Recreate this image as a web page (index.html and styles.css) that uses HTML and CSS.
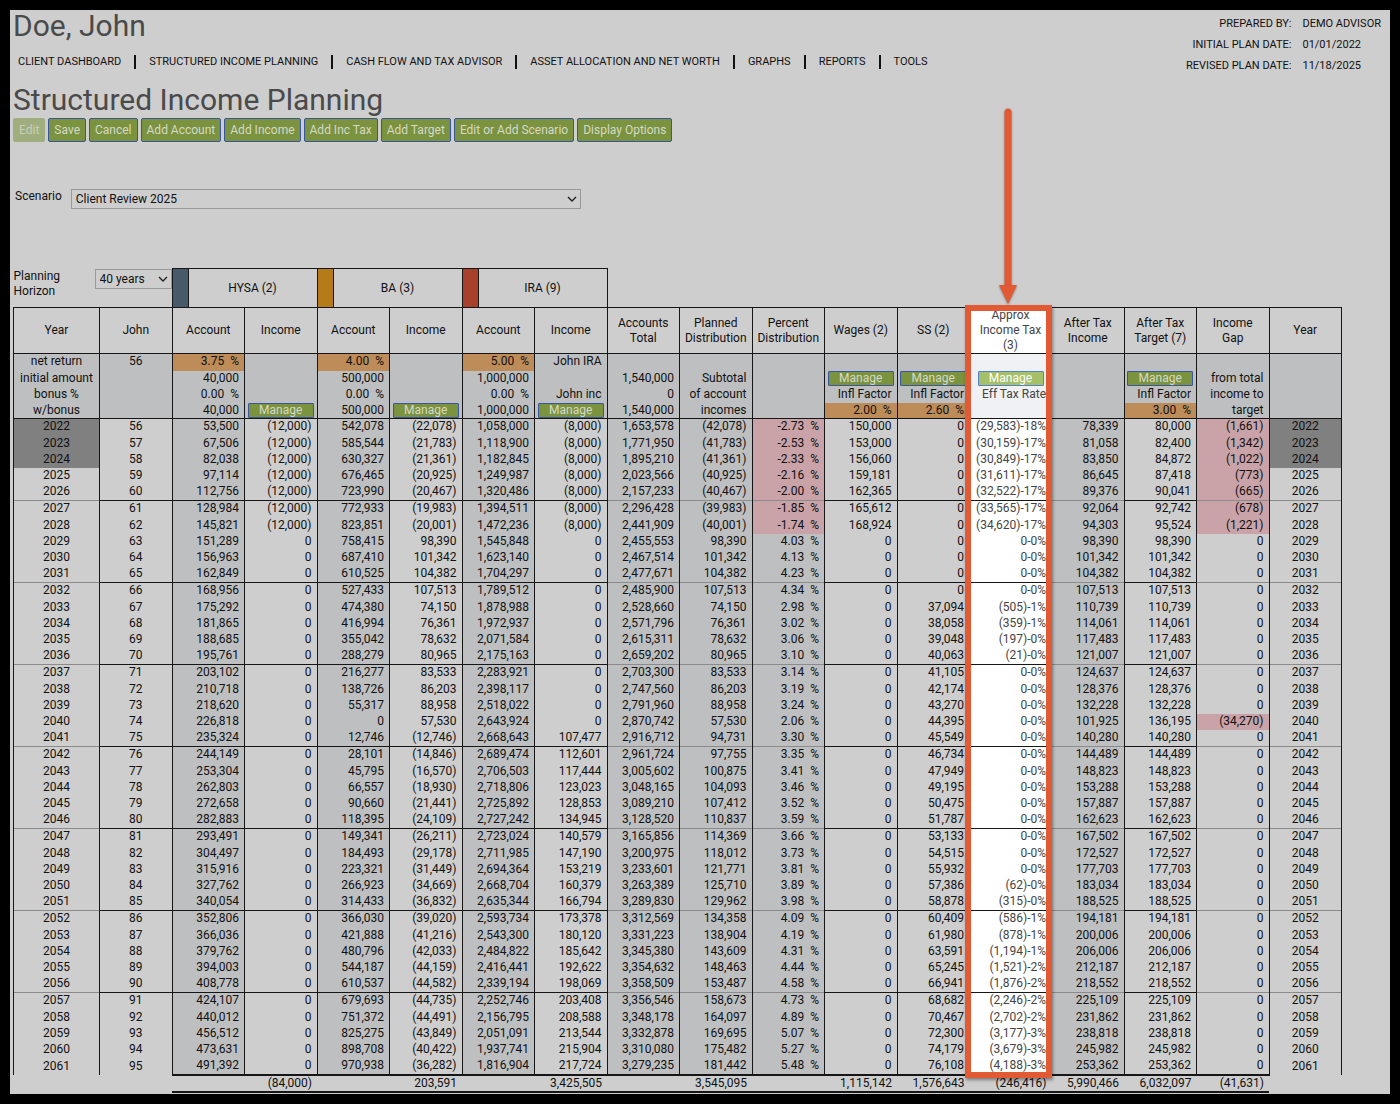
FILE: index.html
```html
<!DOCTYPE html>
<html lang="en">
<head>
    <meta charset="UTF-8">
    <meta name="viewport" content="width=device-width, initial-scale=1.0">
    <title>Structured Income Planning</title>
    <link rel="stylesheet" href="styles.css">
</head>
<body>
    <main class="page">
        <header class="header">
            <div class="header-left">
                <h1>Doe, John</h1>
                <nav class="menu">
                    <a href="#">CLIENT DASHBOARD</a>
                    <a href="#">STRUCTURED INCOME PLANNING</a>
                    <a href="#">CASH FLOW AND TAX ADVISOR</a>
                    <a href="#">ASSET ALLOCATION AND NET WORTH</a>
                    <a href="#">GRAPHS</a>
                    <a href="#">REPORTS</a>
                    <a href="#">TOOLS</a>
                </nav>
            </div>
            <dl class="plan-info">
                <dt>PREPARED BY:</dt><dd>DEMO ADVISOR</dd>
                <dt>INITIAL PLAN DATE:</dt><dd>01/01/2022</dd>
                <dt>REVISED PLAN DATE:</dt><dd>11/18/2025</dd>
            </dl>
        </header>

        <h2>Structured Income Planning</h2>
        <div class="toolbar">
            <button type="button" disabled>Edit</button>
            <button type="button">Save</button>
            <button type="button">Cancel</button>
            <button type="button">Add Account</button>
            <button type="button">Add Income</button>
            <button type="button">Add Inc Tax</button>
            <button type="button">Add Target</button>
            <button type="button">Edit or Add Scenario</button>
            <button type="button">Display Options</button>
        </div>

        <div class="scenario">
            <label for="scenario">Scenario</label>
            <select id="scenario" name="scenario">
                <option>Client Review 2025</option>
            </select>
        </div>

        <div class="plan">
            <table class="plan-table">
                <colgroup>
                    <col class="col-year"><col><col><col><col><col><col><col><col>
                    <col><col><col><col><col class="col-tax"><col><col><col><col>
                </colgroup>
                <thead>
                    <tr class="accounts">
                        <td colspan="2" class="blank">
                            <div class="horizon">
                                <label for="horizon">Planning Horizon</label>
                                <select id="horizon" name="horizon">
                                    <option>40 years</option>
                                </select>
                            </div>
                        </td>
                        <th colspan="2"><div class="account"><span class="swatch blue"></span><span class="name">HYSA (2)</span></div></th>
                        <th colspan="2"><div class="account"><span class="swatch gold"></span><span class="name">BA (3)</span></div></th>
                        <th colspan="2"><div class="account"><span class="swatch red"></span><span class="name">IRA (9)</span></div></th>
                        <td colspan="10" class="blank"></td>
                    </tr>
                    <tr class="titles">
                        <th>Year</th>
                        <th>John</th>
                        <th>Account</th>
                        <th>Income</th>
                        <th>Account</th>
                        <th>Income</th>
                        <th>Account</th>
                        <th>Income</th>
                        <th>Accounts Total</th>
                        <th>Planned Distribution</th>
                        <th>Percent Distribution</th>
                        <th>Wages (2)</th>
                        <th>SS (2)</th>
                        <th class="tax">Approx Income Tax (3)</th>
                        <th>After Tax Income</th>
                        <th>After Tax Target (7)</th>
                        <th>Income Gap</th>
                        <th>Year</th>
                    </tr>
                </thead>
                <tbody class="setup">
                    <tr class="first">
                        <td class="center">net return</td><td class="center">56</td>
                        <td class="rate">3.75&nbsp; %</td><td></td>
                        <td class="rate">4.00&nbsp; %</td><td></td>
                        <td class="rate">5.00&nbsp; %</td><td>John IRA</td>
                        <td></td><td></td><td></td><td></td><td></td><td class="tax"></td><td></td><td></td><td></td><td></td>
                    </tr>
                    <tr>
                        <td class="center">initial amount</td><td></td>
                        <td>40,000</td><td></td>
                        <td>500,000</td><td></td>
                        <td>1,000,000</td><td></td>
                        <td>1,540,000</td><td>Subtotal</td><td></td>
                        <td class="action"><button type="button">Manage</button></td>
                        <td class="action"><button type="button">Manage</button></td>
                        <td class="action tax"><button type="button">Manage</button></td>
                        <td></td>
                        <td class="action"><button type="button">Manage</button></td>
                        <td>from total</td><td></td>
                    </tr>
                    <tr>
                        <td class="center">bonus %</td><td></td>
                        <td>0.00&nbsp; %</td><td></td>
                        <td>0.00&nbsp; %</td><td></td>
                        <td>0.00&nbsp; %</td><td>John inc</td>
                        <td>0</td><td>of account</td><td></td>
                        <td>Infl Factor</td><td>Infl Factor</td><td class="tax">Eff Tax Rate</td><td></td><td>Infl Factor</td>
                        <td>income to</td><td></td>
                    </tr>
                    <tr>
                        <td class="center">w/bonus</td><td></td>
                        <td>40,000</td><td class="action"><button type="button">Manage</button></td>
                        <td>500,000</td><td class="action"><button type="button">Manage</button></td>
                        <td>1,000,000</td><td class="action"><button type="button">Manage</button></td>
                        <td>1,540,000</td><td>incomes</td><td></td>
                        <td class="rate">2.00&nbsp; %</td><td class="rate">2.60&nbsp; %</td><td class="tax"></td><td></td><td class="rate">3.00&nbsp; %</td>
                        <td>target</td><td></td>
                    </tr>
                </tbody>
                <tbody class="years" id="years"></tbody>
                <tfoot>
                    <tr>
                        <td colspan="2" class="blank"></td>
                        <td></td><td>(84,000)</td>
                        <td></td><td>203,591</td>
                        <td></td><td>3,425,505</td>
                        <td></td><td>3,545,095</td><td></td>
                        <td>1,115,142</td><td>1,576,643</td><td>(246,416)</td>
                        <td>5,990,466</td><td>6,032,097</td><td>(41,631)</td>
                        <td class="blank"></td>
                    </tr>
                </tfoot>
            </table>
            <div class="callout">
                <svg class="arrow" width="20" height="198" viewBox="0 0 20 198" aria-hidden="true">
                    <path d="M10 5V182" fill="none" stroke="#e25a33" stroke-width="7" stroke-linecap="round"/>
                    <path d="M1 178H19L10 197Z" fill="#e25a33"/>
                </svg>
            </div>
        </div>
    </main>
    <script src="script.js"></script>
</body>
</html>
```
FILE: styles.css
```css
* {
    box-sizing: border-box;
}
body {
    margin: 0;
    padding: 10px;
    background: #000;
    color: #111;
    font-family: Roboto, Arial, sans-serif;
    font-size: 12px;
    line-height: 15px;
}
button, select {
    font-family: inherit;
}
.page {
    background: #cecece;
    padding: 0 48px 1px 3px;
}

/* header */
.header {
    display: flex;
    justify-content: space-between;
    margin-right: -39px;
}
h1, h2 {
    margin: 0;
    color: #4a4a4a;
    font-size: 30px;
    font-weight: 400;
    line-height: 32px;
}
.menu {
    display: flex;
    padding: 12px 5px 14px;
}
.menu a {
    display: flex;
    align-items: center;
    color: #111;
    font-size: 11px;
    line-height: 16px;
    text-decoration: none;
}
.menu a + a::before {
    content: "";
    width: 2px;
    height: 14px;
    margin: 0 13px;
    background: #111;
}
.plan-info {
    display: grid;
    grid-template-columns: auto auto;
    column-gap: 11px;
    align-content: start;
    margin: 3px 0 0;
    font-size: 11px;
    line-height: 21px;
}
.plan-info dt {
    text-align: right;
}
.plan-info dd {
    margin: 0;
}

/* buttons under the title */
.toolbar {
    display: flex;
    gap: 3px;
    margin-top: 2px;
}
.toolbar button {
    height: 24px;
    padding: 0 5px;
    border: 1px solid #3a569c;
    border-radius: 2px;
    background: #7b923f;
    color: #d5d9c8;
    font-size: 12px;
}
.toolbar button:disabled {
    border-color: #a0ae7d;
    background: #a0ae7d;
    color: #c9cfba;
}

/* drop-downs */
select {
    appearance: none;
    height: 20px;
    padding: 0 4px;
    border: 1px solid #999;
    border-radius: 0;
    background: #cecece url("data:image/svg+xml,%3Csvg xmlns='http://www.w3.org/2000/svg' width='10' height='6'%3E%3Cpath d='M1 1l4 4 4-4' fill='none' stroke='%23222' stroke-width='1.4'/%3E%3C/svg%3E") no-repeat right 3px center;
    color: #111;
    font-size: 12px;
}
.scenario {
    display: flex;
    gap: 9px;
    margin: 47px 0 59px;
    padding-left: 2px;
}
.scenario select {
    width: 510px;
}

/* plan table */
.plan {
    position: relative;
}
.plan-table {
    width: 100%;
    table-layout: fixed;
    border-collapse: collapse;
}
.col-year {
    width: 86px;
}
.col-tax {
    width: 82px;
}
.plan-table th, .plan-table td {
    padding: 0 5px;
    border: 0 solid #161616;
    border-width: 0 1px;
    font-weight: 400;
    text-align: right;
    white-space: nowrap;
}
.plan-table .blank {
    padding: 0;
    border: 0;
}
.plan-table .center {
    text-align: center;
}
.plan-table .accounts th {
    height: 39px;
    padding: 0;
    border-width: 1px;
}
.horizon {
    display: flex;
    justify-content: space-between;
    height: 38px;
    text-align: left;
    white-space: normal;
}
.horizon label {
    width: 60px;
}
.horizon select {
    width: 77px;
}
.account {
    display: flex;
    align-items: center;
    height: 38px;
}
.swatch {
    width: 16px;
    height: 100%;
    border-right: 1px solid #161616;
}
.blue {
    background: #475a69;
}
.gold {
    background: #b47b18;
}
.red {
    background: #a8412c;
}
.account .name {
    flex: 1;
    text-align: center;
}
.plan-table .titles th {
    height: 46px;
    padding: 0 4px;
    border-width: 1px;
    text-align: center;
    white-space: normal;
}
.plan-table .titles .tax {
    padding: 0 8px;
}
.setup td {
    height: 16px;
    background: #bdbfc1;
}
.plan-table .first td {
    height: 17px;
    padding-bottom: 1px;
}
.setup .rate {
    background: #be8c59;
}
.plan-table .action {
    padding: 0;
    text-align: center;
}
.action button {
    display: block;
    width: 66px;
    height: 15px;
    margin: 0 auto;
    padding: 0;
    border: 1px solid #3a569c;
    border-radius: 1px;
    background: #7b923f;
    color: #d5d9c8;
    font-size: 12px;
    line-height: 13px;
}
.years td {
    height: 16px;
}
.years .first td {
    border-top: 1px solid #161616;
}
.years .last td {
    height: 17px;
}
.years .first:not(:first-child) .light {
    border-top-color: #8b8b8b;
}
.years .shaded {
    background: #bdbfc1;
}
.years .past {
    background: #808080;
}
.years .short {
    background: #c9a3a7;
}
.plan-table .tax {
    background: #fff;
    color: #444;
}
.setup .tax {
    background: #f0f1f4;
}
.tax button {
    border-color: #5580cc;
    background: #a6bf69;
    color: #fff;
}
.plan-table tfoot td {
    height: 17px;
    border-width: 2px 0;
}
.plan-table tfoot .blank {
    border: 0;
}

/* frame round the income tax column, with its arrow */
.callout {
    position: absolute;
    top: 37px;
    bottom: 15px;
    left: 71.6%;
    width: 6.6%;
    border: 6px solid #e25a33;
    box-shadow: 1px 2px 3px rgba(0, 0, 0, 0.4);
    pointer-events: none;
}
.arrow {
    position: absolute;
    bottom: calc(100% + 6px);
    left: calc(50% - 10px);
    filter: drop-shadow(0 1px 1px rgba(0, 0, 0, 0.4));
}
```
FILE: script.js
```js
// HYSA, income, BA, income, IRA, income, total, distribution, percent,
// wages, SS, tax, tax rate, after tax income, target, gap
const firstYear = 2022;
const firstAge = 56;
const plan = [
    [53500, -12000, 542078, -22078, 1058000, -8000, 1653578, -42078, -2.73, 150000, 0, -29583, 18, 78339, 80000, -1661],
    [67506, -12000, 585544, -21783, 1118900, -8000, 1771950, -41783, -2.53, 153000, 0, -30159, 17, 81058, 82400, -1342],
    [82038, -12000, 630327, -21361, 1182845, -8000, 1895210, -41361, -2.33, 156060, 0, -30849, 17, 83850, 84872, -1022],
    [97114, -12000, 676465, -20925, 1249987, -8000, 2023566, -40925, -2.16, 159181, 0, -31611, 17, 86645, 87418, -773],
    [112756, -12000, 723990, -20467, 1320486, -8000, 2157233, -40467, -2.00, 162365, 0, -32522, 17, 89376, 90041, -665],
    [128984, -12000, 772933, -19983, 1394511, -8000, 2296428, -39983, -1.85, 165612, 0, -33565, 17, 92064, 92742, -678],
    [145821, -12000, 823851, -20001, 1472236, -8000, 2441909, -40001, -1.74, 168924, 0, -34620, 17, 94303, 95524, -1221],
    [151289, 0, 758415, 98390, 1545848, 0, 2455553, 98390, 4.03, 0, 0, 0, 0, 98390, 98390, 0],
    [156963, 0, 687410, 101342, 1623140, 0, 2467514, 101342, 4.13, 0, 0, 0, 0, 101342, 101342, 0],
    [162849, 0, 610525, 104382, 1704297, 0, 2477671, 104382, 4.23, 0, 0, 0, 0, 104382, 104382, 0],
    [168956, 0, 527433, 107513, 1789512, 0, 2485900, 107513, 4.34, 0, 0, 0, 0, 107513, 107513, 0],
    [175292, 0, 474380, 74150, 1878988, 0, 2528660, 74150, 2.98, 0, 37094, -505, 1, 110739, 110739, 0],
    [181865, 0, 416994, 76361, 1972937, 0, 2571796, 76361, 3.02, 0, 38058, -359, 1, 114061, 114061, 0],
    [188685, 0, 355042, 78632, 2071584, 0, 2615311, 78632, 3.06, 0, 39048, -197, 0, 117483, 117483, 0],
    [195761, 0, 288279, 80965, 2175163, 0, 2659202, 80965, 3.10, 0, 40063, -21, 0, 121007, 121007, 0],
    [203102, 0, 216277, 83533, 2283921, 0, 2703300, 83533, 3.14, 0, 41105, 0, 0, 124637, 124637, 0],
    [210718, 0, 138726, 86203, 2398117, 0, 2747560, 86203, 3.19, 0, 42174, 0, 0, 128376, 128376, 0],
    [218620, 0, 55317, 88958, 2518022, 0, 2791960, 88958, 3.24, 0, 43270, 0, 0, 132228, 132228, 0],
    [226818, 0, 0, 57530, 2643924, 0, 2870742, 57530, 2.06, 0, 44395, 0, 0, 101925, 136195, -34270],
    [235324, 0, 12746, -12746, 2668643, 107477, 2916712, 94731, 3.30, 0, 45549, 0, 0, 140280, 140280, 0],
    [244149, 0, 28101, -14846, 2689474, 112601, 2961724, 97755, 3.35, 0, 46734, 0, 0, 144489, 144489, 0],
    [253304, 0, 45795, -16570, 2706503, 117444, 3005602, 100875, 3.41, 0, 47949, 0, 0, 148823, 148823, 0],
    [262803, 0, 66557, -18930, 2718806, 123023, 3048165, 104093, 3.46, 0, 49195, 0, 0, 153288, 153288, 0],
    [272658, 0, 90660, -21441, 2725892, 128853, 3089210, 107412, 3.52, 0, 50475, 0, 0, 157887, 157887, 0],
    [282883, 0, 118395, -24109, 2727242, 134945, 3128520, 110837, 3.59, 0, 51787, 0, 0, 162623, 162623, 0],
    [293491, 0, 149341, -26211, 2723024, 140579, 3165856, 114369, 3.66, 0, 53133, 0, 0, 167502, 167502, 0],
    [304497, 0, 184493, -29178, 2711985, 147190, 3200975, 118012, 3.73, 0, 54515, 0, 0, 172527, 172527, 0],
    [315916, 0, 223321, -31449, 2694364, 153219, 3233601, 121771, 3.81, 0, 55932, 0, 0, 177703, 177703, 0],
    [327762, 0, 266923, -34669, 2668704, 160379, 3263389, 125710, 3.89, 0, 57386, -62, 0, 183034, 183034, 0],
    [340054, 0, 314433, -36832, 2635344, 166794, 3289830, 129962, 3.98, 0, 58878, -315, 0, 188525, 188525, 0],
    [352806, 0, 366030, -39020, 2593734, 173378, 3312569, 134358, 4.09, 0, 60409, -586, 1, 194181, 194181, 0],
    [366036, 0, 421888, -41216, 2543300, 180120, 3331223, 138904, 4.19, 0, 61980, -878, 1, 200006, 200006, 0],
    [379762, 0, 480796, -42033, 2484822, 185642, 3345380, 143609, 4.31, 0, 63591, -1194, 1, 206006, 206006, 0],
    [394003, 0, 544187, -44159, 2416441, 192622, 3354632, 148463, 4.44, 0, 65245, -1521, 2, 212187, 212187, 0],
    [408778, 0, 610537, -44582, 2339194, 198069, 3358509, 153487, 4.58, 0, 66941, -1876, 2, 218552, 218552, 0],
    [424107, 0, 679693, -44735, 2252746, 203408, 3356546, 158673, 4.73, 0, 68682, -2246, 2, 225109, 225109, 0],
    [440012, 0, 751372, -44491, 2156795, 208588, 3348178, 164097, 4.89, 0, 70467, -2702, 2, 231862, 231862, 0],
    [456512, 0, 825275, -43849, 2051091, 213544, 3332878, 169695, 5.07, 0, 72300, -3177, 3, 238818, 238818, 0],
    [473631, 0, 898708, -40422, 1937741, 215904, 3310080, 175482, 5.27, 0, 74179, -3679, 3, 245982, 245982, 0],
    [491392, 0, 970938, -36282, 1816904, 217724, 3279235, 181442, 5.48, 0, 76108, -4188, 3, 253362, 253362, 0]
];

function money(n) {
    const text = Math.abs(n).toLocaleString('en-US');
    return n < 0 ? `(${text})` : text;
}

function cell(text, className = '') {
    return `<td class="${className}">${text}</td>`;
}

document.getElementById('years').innerHTML = plan.map((row, i) => {
    const [hysa, hysaInc, ba, baInc, ira, iraInc, total, dist, pct, wages, ss, tax, rate, income, target, gap] = row;
    const year = cell(firstYear + i, i < 3 ? 'center light past' : 'center light');
    const group = i % 5 === 0 ? 'first' : i % 5 === 4 ? 'last' : '';

    return `<tr class="${group}">` +
        year +
        cell(firstAge + i, 'center') +
        cell(money(hysa), 'shaded') + cell(money(hysaInc)) +
        cell(money(ba), 'shaded') + cell(money(baInc)) +
        cell(money(ira), 'shaded') + cell(money(iraInc)) +
        cell(money(total), 'shaded light') +
        cell(money(dist), 'shaded light') +
        cell(pct.toFixed(2) + '&nbsp; %', pct < 0 ? 'light short' : 'light shaded') +
        cell(money(wages)) +
        cell(money(ss)) +
        cell(`${money(tax)}-${rate}%`, 'tax') +
        cell(money(income), 'shaded light') +
        cell(money(target)) +
        cell(money(gap), gap < 0 ? 'light short' : 'light') +
        year +
        '</tr>';
}).join('');
```
